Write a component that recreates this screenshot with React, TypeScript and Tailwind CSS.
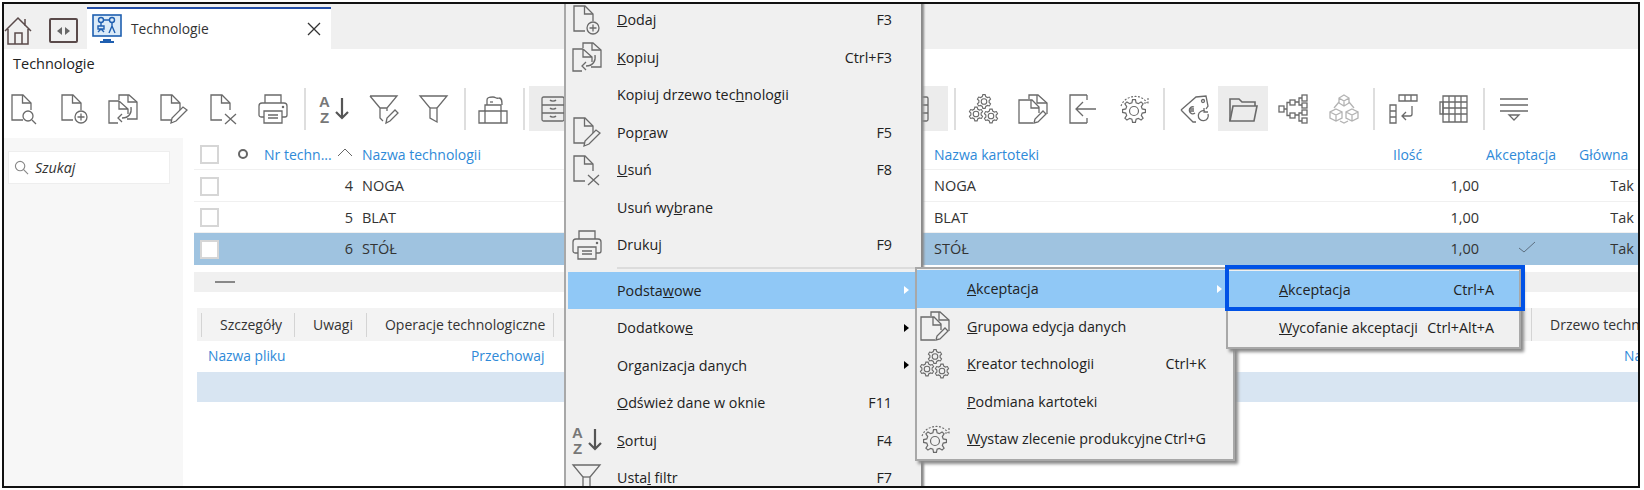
import type { ReactNode } from "react";

const S = ({ children, className = "" }: { children: ReactNode; className?: string }) => (
  <svg viewBox="0 0 30 30" className={`w-[30px] h-[30px] shrink-0 overflow-visible ${className}`} fill="none" stroke="#6a6a6a" strokeWidth="1.3">
    {children}
  </svg>
);

const Doc = () => (
  <>
    <path d="M13 26H2V1h11l8 8v7" />
    <path d="M12.500 1v8H21" />
  </>
);

const DocSearch = () => (
  <S><Doc /><circle cx="18" cy="22" r="5" /><path d="M22 26l4 4" /></S>
);
const DocAdd = () => (
  <S><Doc /><circle cx="21" cy="23" r="6" /><path d="M21 19.500v7M17.500 23h7" /></S>
);
const DocCopy = () => (
  <S>
    <path d="M11 6V1h10l8 7v17H19" />
    <path d="M20 1v7h9" />
    <path d="M11 7H1v22h9M11 7l9 8v5M11 7v8h9" />
    <path d="M23 13c1 6-2 11-9 11M14 20l-4 4 4 4" />
  </S>
);
const DocEdit = () => (
  <S>
    <path d="M12 26H2V1h11l8 8v7" /><path d="M12.500 1v8H21" />
    <path d="M12 29l1-5 11-11 4 3-11 11z" />
  </S>
);
const DocDelete = () => (
  <S><Doc /><path d="M16 20l11 10M27 20L16 30" /></S>
);
const Printer = () => (
  <S>
    <path d="M7 9V1h16v8" />
    <path d="M6 23H3a2 2 0 0 1-2-2v-9a3 3 0 0 1 3-3h22a3 3 0 0 1 3 3v9a2 2 0 0 1-2 2h-3" />
    <path d="M6 17h18v12H6z" />
    <path d="M10 21h10M10 24h10" />
    <circle cx="25" cy="13" r=".6" fill="#6a6a6a" />
  </S>
);
const Sort = () => (
  <S>
    <text x="0" y="13" fontSize="15" fontWeight="700" fontFamily="Liberation Sans, sans-serif" fill="#777" stroke="none">A</text>
    <text x="1" y="29" fontSize="15" fontWeight="700" fontFamily="Liberation Sans, sans-serif" fill="#777" stroke="none">Z</text>
    <path d="M23 4v20M17 18l6 6 6-6" stroke="#555" strokeWidth="2.2" />
  </S>
);
const Funnel = () => (
  <S><path d="M1 2h27L18 14v14l-7-4V14z" /><path d="M11 14h7" /></S>
);
const FunnelEdit = () => (
  <S>
    <path d="M1 2h27L18 14v3M11 14v10l3 3M1 2l10 12h7" />
    <path d="M17 29l1-5 8-8 3 3-8 8z" />
  </S>
);
const Machine = () => (
  <S>
    <path d="M1 17h6v-6h16v6h6v12H1z" />
    <path d="M7 29V17h16v12" />
    <path d="M9 11V6c0-3 3-3 6-3s3 2 6 1M21 4c3 0 3 3 3 7" />
    <path d="M12 8h3" />
  </S>
);
const Drawers = () => (
  <S>
    <rect x="2" y="3" width="22" height="24" rx="1.500" />
    <path d="M2 11h22M2 19h22M10 6c1 1.400 5 1.400 6 0M10 14c1 1.400 5 1.400 6 0M10 22c1 1.400 5 1.400 6 0" />
  </S>
);

// toothed wheel outline, used by the gear icons
const gearPath = (x: number, y: number, outer: number, inner: number, teeth: number) => {
  const pts: string[] = [];
  const step = (Math.PI * 2) / teeth;
  for (let i = 0; i < teeth; i++) {
    const a = i * step - Math.PI / 2;
    const offs: [number, number][] = [
      [-0.32, inner],
      [-0.16, outer],
      [0.16, outer],
      [0.32, inner],
    ];
    offs.forEach(([o, r]) => {
      const t = a + o * step;
      pts.push(`${(x + Math.cos(t) * r).toFixed(2)} ${(y + Math.sin(t) * r).toFixed(2)}`);
    });
  }
  return `M${pts.join("L")}z`;
};

const Cog = ({ x, y }: { x: number; y: number }) => (
  <g strokeWidth="1.100">
    <path d={gearPath(x, y, 7, 5.2, 6)} />
    <circle cx={x} cy={y} r="2.800" />
  </g>
);
const Gears = () => (
  <S><Cog x={15} y={7.500} /><Cog x={7} y={20} /><Cog x={22} y={22} /></S>
);
const MultiDoc = () => (
  <S>
    <path d="M11 5V1h9l9 8v11" /><path d="M19 1v8h10" />
    <path d="M15 29H1V6h13l7 7v6M13 6v8h8" />
    <path d="M16 29l1-4 8-8 3 3-8 8z" />
  </S>
);
const ArrowIn = () => (
  <S><path d="M19 1H2v28h17M19 1v5M19 29v-5" /><path d="M28 15H8M15 8l-7 7 7 7" /></S>
);
const GearArrow = () => (
  <S>
    <path d={gearPath(15, 17, 11.500, 8.500, 8)} strokeWidth="1.200" />
    <circle cx="15" cy="17" r="4.500" strokeWidth="1.200" />
    <path d="M2 12C5 2 22 -2 28 9M29 4v5h-5" strokeDasharray="2 1.500" strokeWidth="1.100" />
  </S>
);
const Tag = () => (
  <S>
    <path d="M1 16L16 3l10-1 2 10-2 3M16 28l-3 0L1 16" />
    <circle cx="23" cy="7" r="1.500" />
    <path d="M14 13a3.500 3.500 0 1 0 1 6M9 15h5M9 17h5" />
    <path d="M28 20a5 5 0 1 1-3-3M24 14v4h4" />
  </S>
);
const Folder = () => (
  <S>
    <path d="M2 27V5h9l3 3h13v4" strokeWidth="1.600" />
    <path d="M2 27l3-15h24l-3 15z" strokeWidth="1.600" />
  </S>
);
const Tree = () => (
  <S>
    <rect x="1" y="12" width="5" height="6" /><rect x="12" y="6" width="5" height="5" /><rect x="12" y="19" width="5" height="5" />
    <rect x="24" y="1" width="5" height="6" /><rect x="24" y="9" width="5" height="5" /><rect x="24" y="16" width="5" height="5" /><rect x="24" y="24" width="5" height="5" />
    <path d="M6 15h3V8.500h3M9 15v6.500h3M17 8h4V4h3M21 8v3h3M17 21h4v-2h3M21 21v6h3" />
  </S>
);
const Cubes = () => (
  <S className="opacity-50">
    <path d="M15 1l5 3v5l-5 3-5-3V4zM10 4l5 3 5-3M15 7v5" />
    <path d="M7 15l6 3v6l-6 3-6-3v-6zM1 18l6 3 6-3M7 21v6" />
    <path d="M23 15l6 3v6l-6 3-6-3v-6zM17 18l6 3 6-3M23 21v6" />
    <path d="M10 8L5 14M20 8l5 6M11 27l4 2 4-2" />
  </S>
);
const Pivot = () => (
  <S>
    <path d="M10 1h18v6H10zM16 1v6M22 1v6" />
    <path d="M1 11h6v18H1zM1 17h6M1 23h6" />
    <path d="M23 12v8a2 2 0 0 1-2 2H13M17 18l-4 4 4 4" />
  </S>
);
const GridIcon = () => (
  <S>
    <path d="M4 2h24v26H4zM4 8h24M4 14h24M4 20h24M10 2v26M16 2v26M22 2v26" />
    <path d="M1 8h3v12H1z" />
  </S>
);
const Lines = () => (
  <S>
    <path d="M1 5h28M1 11h28M1 17h28" strokeWidth="1.500" />
    <path d="M10 21h10l-5 5z" />
  </S>
);

const Sep = ({ className }: { className: string }) => <div className={`w-[2px] h-[42px] bg-[#dedede] shrink-0 ${className}`} />;

const Check = () => <div className="w-[19px] h-[19px] border-2 border-[#d6d6d6] bg-white" />;

type Row = { nr: string; name: string; sel?: boolean };
const rows: Row[] = [
  { nr: "4", name: "NOGA" },
  { nr: "5", name: "BLAT" },
  { nr: "6", name: "STÓŁ", sel: true },
];

type MenuRow = { label: ReactNode; icon?: ReactNode; key_?: string; arrow?: boolean; active?: boolean };

const MenuItem = ({ item, iconCol, arrowCol }: { item: MenuRow; iconCol: string; arrowCol: string }) => (
  <div className={`flex items-center h-[37.5px] shrink-0 ${item.active ? "bg-[#90c8f6]" : ""}`}>
    <div className={`${iconCol} shrink-0 flex items-center`}>{item.icon}</div>
    <div className="whitespace-nowrap">{item.label}</div>
    <div className="flex-1" />
    {item.key_ && <div className="whitespace-nowrap">{item.key_}</div>}
    <div className={`${arrowCol} shrink-0 flex justify-end`}>
      {item.arrow && <div className={`w-0 h-0 border-y-[4px] border-y-transparent border-l-[5px] ${item.active ? "border-l-white" : "border-l-black"}`} />}
    </div>
  </div>
);

const menu1: MenuRow[] = [
  { icon: <DocAdd />, label: <><u>D</u>odaj</>, key_: "F3" },
  { icon: <DocCopy />, label: <><u>K</u>opiuj</>, key_: "Ctrl+F3" },
  { label: <>Kopiuj drzewo tec<u>h</u>nologii</> },
  { icon: <DocEdit />, label: <>Pop<u>r</u>aw</>, key_: "F5" },
  { icon: <DocDelete />, label: <><u>U</u>suń</>, key_: "F8" },
  { label: <>Usuń wy<u>b</u>rane</> },
  { icon: <Printer />, label: <>Druku<u>j</u></>, key_: "F9" },
];
const menu1b: MenuRow[] = [
  { label: <>Podsta<u>w</u>owe</>, arrow: true, active: true },
  { label: <>Dodatkow<u>e</u></>, arrow: true },
  { label: <>Or<u>g</u>anizacja danych</>, arrow: true },
  { label: <><u>O</u>dśwież dane w oknie</>, key_: "F11" },
  { icon: <Sort />, label: <><u>S</u>ortuj</>, key_: "F4" },
  { icon: <Funnel />, label: <>Usta<u>l</u> filtr</>, key_: "F7" },
];
const menu2: MenuRow[] = [
  { label: <><u>A</u>kceptacja</>, arrow: true, active: true },
  { icon: <MultiDoc />, label: <><u>G</u>rupowa edycja danych</> },
  { icon: <Gears />, label: <><u>K</u>reator technologii</>, key_: "Ctrl+K" },
  { label: <><u>P</u>odmiana kartoteki</> },
  { icon: <GearArrow />, label: <><u>W</u>ystaw zlecenie produkcyjne</>, key_: "Ctrl+G" },
];

export default function App() {
  return (
    <div className="h-[490px] w-[1644px] bg-white pt-[2px] pl-[2px] font-['Open_Sans',sans-serif] text-[14.3px] text-[#333]">
      <div className="relative w-[1638px] h-[486px] border-2 border-[#111] overflow-hidden flex flex-col">
        {/* tab strip */}
        <div className="h-[45px] shrink-0 bg-[#f0f0f0] flex items-end">
          <svg viewBox="0 0 30 30" className="w-[30px] h-[30px] mb-[3px] shrink-0" fill="none" stroke="#5a4a4a" strokeWidth="1.500">
            <path d="M1 15L14 2l13 13M4 13v15h20V13M11 28V17h7v11M21 3v7" />
          </svg>
          <div className="ml-[15px] mb-[6px] w-[29px] h-[25px] rounded-[2px] border-2 border-[#5a4a4a] flex items-center justify-center gap-[3px] shrink-0">
            <div className="w-0 h-0 border-y-[4px] border-y-transparent border-r-[5px] border-r-[#666]" />
            <div className="w-0 h-0 border-y-[4px] border-y-transparent border-l-[5px] border-l-[#666]" />
          </div>
          <div className="ml-[9px] w-[244px] h-[42px] bg-white border-t-2 border-[#234ea8] flex items-center shrink-0 pr-[10px]">
            <svg viewBox="0 0 30 30" className="w-[30px] h-[30px] ml-[5px] shrink-0" fill="none" stroke="#1f5fb0" strokeWidth="1.400">
              <rect x="1" y="1" width="28" height="21" fill="#dcebf8" strokeWidth="1.600" />
              <path d="M11 26h8M8 28h14" strokeWidth="2" />
              <circle cx="9" cy="6" r="2.500" />
              <circle cx="20" cy="6" r="2.500" />
              <path d="M11.500 6h6M9 9v3M20 9v3M6 12h6v3H6zM6 18l3-3 3 3M20 12l-3 7M20 12l3 7" />
            </svg>
            <span className="ml-[9px] text-[13.8px]">Technologie</span>
            <div className="flex-1" />
            <svg viewBox="0 0 14 14" className="w-[14px] h-[14px] shrink-0" fill="none" stroke="#333" strokeWidth="1.300">
              <path d="M1 1l12 12M13 1L1 13" />
            </svg>
          </div>
        </div>

        <div className="h-[37px] shrink-0 pt-[5px] pl-[9px] text-[14.5px] leading-[20px] text-[#222]">Technologie</div>

        {/* toolbar */}
        <div className="h-[45px] shrink-0 flex items-center">
          <div className="ml-[6px]"><DocSearch /></div>
          <div className="ml-[20px]"><DocAdd /></div>
          <div className="ml-[18px]"><DocCopy /></div>
          <div className="ml-[21px]"><DocEdit /></div>
          <div className="ml-[20px]"><DocDelete /></div>
          <div className="ml-[19px]"><Printer /></div>
          <Sep className="ml-[16px]" />
          <div className="ml-[13px]"><Sort /></div>
          <div className="ml-[20px]"><FunnelEdit /></div>
          <div className="ml-[20px]"><Funnel /></div>
          <Sep className="ml-[15px]" />
          <div className="ml-[12px]"><Machine /></div>
          <Sep className="ml-[15px]" />
          <div className="ml-[4px] w-[419px] h-[45px] bg-[#ececec] flex items-center justify-between pl-[11px] pr-[14px] shrink-0">
            <Drawers />
            <Drawers />
          </div>
          <Sep className="ml-[6px]" />
          <div className="ml-[13px]"><Gears /></div>
          <div className="ml-[19px]"><MultiDoc /></div>
          <div className="ml-[20px]"><ArrowIn /></div>
          <div className="ml-[21px]"><GearArrow /></div>
          <Sep className="ml-[14px]" />
          <div className="ml-[15px]"><Tag /></div>
          <div className="ml-[8px] w-[50px] h-[45px] bg-[#ececec] flex items-center justify-center shrink-0"><Folder /></div>
          <div className="ml-[10px]"><Tree /></div>
          <div className="ml-[21px]"><Cubes /></div>
          <Sep className="ml-[14px]" />
          <div className="ml-[14px]"><Pivot /></div>
          <div className="ml-[20px]"><GridIcon /></div>
          <Sep className="ml-[14px]" />
          <div className="ml-[14px]"><Lines /></div>
        </div>

        {/* body */}
        <div className="flex-1 flex mt-[7px] min-h-0">
          <div className="w-[179px] shrink-0 bg-[#f7f7f7] px-[4px] pt-[13px]">
            <div className="w-[162px] h-[33px] bg-white border border-[#eeeeee] flex items-center pl-[5px]">
              <svg viewBox="0 0 16 16" className="w-[15px] h-[15px] shrink-0" fill="none" stroke="#888" strokeWidth="1.200">
                <circle cx="6.500" cy="6.500" r="5" />
                <path d="M10 10l5 5" />
              </svg>
              <span className="ml-[6px] italic text-[#333]">Szukaj</span>
            </div>
          </div>

          <div className="flex-1 min-w-0 ml-[11px]">
            {/* grid */}
            <div className="h-[32px] pt-[1px] flex items-center border-b border-[#f0f0f0] text-[#2f8ad8] text-[14px]">
              <div className="w-[38px] pl-[6px] shrink-0"><Check /></div>
              <div className="w-[22px] flex justify-center shrink-0">
                <div className="w-[10px] h-[10px] rounded-full border-2 border-[#666]" />
              </div>
              <div className="w-[99px] pl-[10px] shrink-0 flex items-center">
                <span className="whitespace-nowrap">Nr techn...</span>
                <svg viewBox="0 0 16 8" className="w-[16px] h-[8px] ml-[5px] -mt-[5px] shrink-0" fill="none" stroke="#666" strokeWidth="1">
                  <path d="M1 8l7-7 7 7" />
                </svg>
              </div>
              <div className="w-[581px] pl-[9px] shrink-0">Nazwa technologii</div>
              <div className="w-[459px] shrink-0">Nazwa kartoteki</div>
              <div className="w-[84px] shrink-0">Ilość</div>
              <div className="w-[93px] pl-[9px] shrink-0">Akceptacja</div>
              <div className="w-[66px] pl-[9px] shrink-0">Główna</div>
            </div>
            {rows.map((r) => (
              <div key={r.nr} className={`h-[31.5px] pt-[2px] flex items-center border-b ${r.sel ? "bg-[#9fc3e0] border-[#9fc3e0]" : "border-[#f0f0f0]"} text-[14.5px]`}>
                <div className="w-[38px] pl-[6px] shrink-0"><Check /></div>
                <div className="w-[22px] shrink-0" />
                <div className="w-[99px] text-right shrink-0">{r.nr}</div>
                <div className="w-[581px] pl-[9px] shrink-0">{r.name}</div>
                <div className="w-[373px] shrink-0">{r.name}</div>
                <div className="w-[172px] text-right shrink-0">1,00</div>
                <div className="w-[91px] shrink-0 flex pl-[39px]">
                  {r.sel && (
                    <svg viewBox="0 0 18 12" className="w-[18px] h-[12px] -mt-[4px]" fill="none" stroke="#5d6f80" strokeWidth="1">
                      <path d="M1 7l5 4L17 1" />
                    </svg>
                  )}
                </div>
                <div className="w-[64px] text-right shrink-0">Tak</div>
              </div>
            ))}

            <div className="mt-[7px] h-[20px] bg-[#f0f0f0] flex items-center pl-[21px]">
              <div className="w-[20px] h-[2px] bg-[#888]" />
            </div>

            {/* tabs */}
            <div className="mt-[16px] ml-[3px] h-[33px] pt-[1px] bg-[#f3f3f3] flex items-center text-[14px] overflow-hidden">
              <div className="ml-[4px] w-[1px] h-[24px] bg-[#d4d4d4] shrink-0" />
              <div className="pl-[18px] pr-[12px] whitespace-nowrap shrink-0">Szczegóły</div>
              <div className="w-[1px] h-[24px] bg-[#d4d4d4] shrink-0" />
              <div className="pl-[18px] pr-[13px] whitespace-nowrap shrink-0">Uwagi</div>
              <div className="w-[1px] h-[24px] bg-[#d4d4d4] shrink-0" />
              <div className="pl-[18px] pr-[8px] whitespace-nowrap shrink-0">Operacje technologiczne</div>
              <div className="w-[1px] h-[24px] bg-[#d4d4d4] shrink-0" />
              <div className="flex-1" />
              <div className="w-[107px] h-[33px] shrink-0 border-l border-[#d4d4d4] pl-[18px] flex items-center whitespace-nowrap overflow-hidden">Drzewo technologii</div>
            </div>
            <div className="h-[31px] ml-[14px] flex items-center text-[#2f8ad8] text-[13.8px]">
              <div className="w-[263px] shrink-0">Nazwa pliku</div>
              <div className="flex-1">Przechowaj</div>
              <div className="w-[14px] shrink-0 overflow-hidden">Nazwa</div>
            </div>
            <div className="ml-[3px] h-[30px] bg-[#d8e5f2]" />
          </div>
        </div>

        {/* context menus */}
        <div className="absolute left-[560px] -top-[3px] w-[357px] h-[500px] bg-[#f0f0f0] border-l-2 border-[#a8a8a8] pl-[2px] text-[#222] shadow-[3px_0_2px_#8a8a8a]">
          {menu1.map((m, i) => (
            <MenuItem key={i} item={m} iconCol="w-[49px] pl-[4px]" arrowCol="w-[29px] pr-[12px]" />
          ))}
          <div className="h-[8px] flex items-center pl-[49px]"><div className="w-full h-[2px] bg-[#dcdcdc]" /></div>
          {menu1b.map((m, i) => (
            <MenuItem key={i} item={m} iconCol="w-[49px] pl-[4px]" arrowCol="w-[29px] pr-[12px]" />
          ))}
        </div>

        <div className="absolute left-[911px] top-[263px] w-[320px] h-[194px] bg-[#f0f0f0] border-2 border-[#a8a8a8] pt-[1px] text-[#222] shadow-[3px_3px_3px_#8a8a8a] flex flex-col">
          {menu2.map((m, i) => (
            <MenuItem key={i} item={m} iconCol="w-[50px] pl-[3px]" arrowCol="w-[27px] pr-[11px]" />
          ))}
        </div>

        <div className="absolute left-[1222px] top-[264px] w-[295px] h-[81px] bg-[#f0f0f0] border-2 border-[#a8a8a8] pt-[1px] pl-[1px] text-[#222] shadow-[3px_3px_3px_#8a8a8a] flex flex-col">
          <div className="relative">
            <MenuItem item={{ label: <><u>A</u>kceptacja</>, key_: "Ctrl+A", active: true }} iconCol="w-[50px]" arrowCol="w-[25px]" />
            <div className="absolute -left-[4px] -right-[6px] -top-[6px] -bottom-[2px] border-[4px] border-[#0052e6]" />
          </div>
          <MenuItem item={{ label: <><u>W</u>ycofanie akceptacji</>, key_: "Ctrl+Alt+A" }} iconCol="w-[50px]" arrowCol="w-[25px]" />
        </div>
      </div>
    </div>
  );
}
